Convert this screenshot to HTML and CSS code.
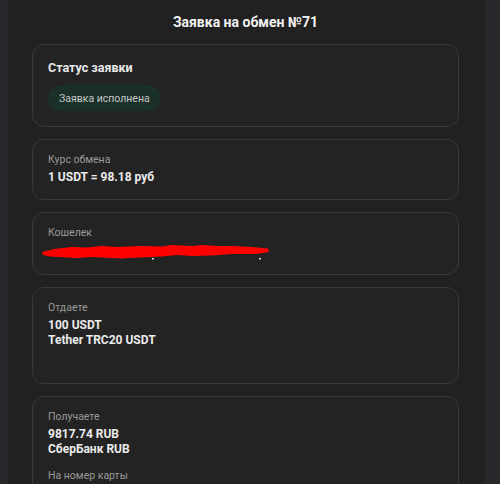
FILE: index.html
```html
<!DOCTYPE html>
<html lang="ru">
<head>
<meta charset="utf-8">
<title>Заявка на обмен №71</title>
<link rel="stylesheet" href="styles.css">
</head>
<body>
<main class="panel">
  <h1 class="title">Заявка на обмен №71</h1>
  <section class="card card-status">
    <h2 class="card-title">Статус заявки</h2>
    <span class="pill">Заявка исполнена</span>
  </section>
  <section class="card">
    <div class="label">Курс обмена</div>
    <div class="value">1 USDT = 98.18 руб</div>
  </section>
  <section class="card">
    <div class="label">Кошелек</div>
    <div class="value wallet">
      <svg class="scribble" width="228" height="18" viewBox="0 0 228 18">
        <polygon fill="#ff0000" points="0,9 12,6 30,4 45,4.5 60,3 75,4 100,3 120,3.5 130,2 150,3 160,2 175,3 190,3 210,4 226,5.5 227,9 215,11 190,11 170,12.5 150,13 135,12 120,13.5 100,14.5 85,15 80,15.5 50,14 35,15 25,14.5 8,13.5 1,12"/>
        <rect x="110" y="15" width="2" height="1.5" fill="#dddddd"/>
        <rect x="217" y="15" width="2" height="1.5" fill="#dddddd"/>
      </svg>
    </div>
  </section>
  <section class="card card-tall">
    <div class="label">Отдаете</div>
    <div class="value">100 USDT</div>
    <div class="value">Tether TRC20 USDT</div>
  </section>
  <section class="card">
    <div class="label">Получаете</div>
    <div class="value">9817.74 RUB</div>
    <div class="value">СберБанк RUB</div>
    <div class="label label-gap">На номер карты</div>
  </section>
</main>
</body>
</html>
```

FILE: styles.css
```css
html, body {
  margin: 0;
  padding: 0;
}
body {
  background: #26282c;
  font-family: Roboto, "Liberation Sans", Arial, sans-serif;
  color: #f0f0f0;
  height: 484px;
  overflow: hidden;
}
.panel {
  margin-left: 8px;
  width: 477px;
  box-sizing: border-box;
  min-height: 484px;
  background: #212121;
  padding: 12px 26px 12px 24px;
  display: flex;
  flex-direction: column;
  gap: 12px;
}
.title {
  margin: 0;
  font-size: 14px;
  line-height: 20px;
  font-weight: bold;
  text-align: center;
  color: #f2f2f2;
}
.card {
  border: 1px solid #393939;
  border-radius: 12px;
  background: #232323;
  padding: 13px 15px 14px;
  display: flex;
  flex-direction: column;
  align-items: flex-start;
}
.card-status {
  padding: 15px 15px 15px;
}
.card-title {
  margin: 0 0 9px;
  font-size: 12.5px;
  line-height: 16px;
  font-weight: bold;
  color: #e8e8e8;
}
.pill {
  display: inline-flex;
  align-items: center;
  height: 26px;
  padding: 0 11px;
  border-radius: 13px;
  background: #1a3028;
  color: #c8c8c8;
  font-size: 10.5px;
}
.label {
  font-size: 10.5px;
  line-height: 14px;
  color: #9a9a9a;
  margin-bottom: 3px;
}
.label-gap {
  margin-top: 12px;
}
.value {
  font-size: 12px;
  line-height: 15px;
  font-weight: bold;
  color: #ebebeb;
}
.wallet {
  height: 17px;
}
.scribble {
  display: block;
  margin-left: -6px;
}
.card-tall {
  min-height: 97px;
  box-sizing: border-box;
}
```
